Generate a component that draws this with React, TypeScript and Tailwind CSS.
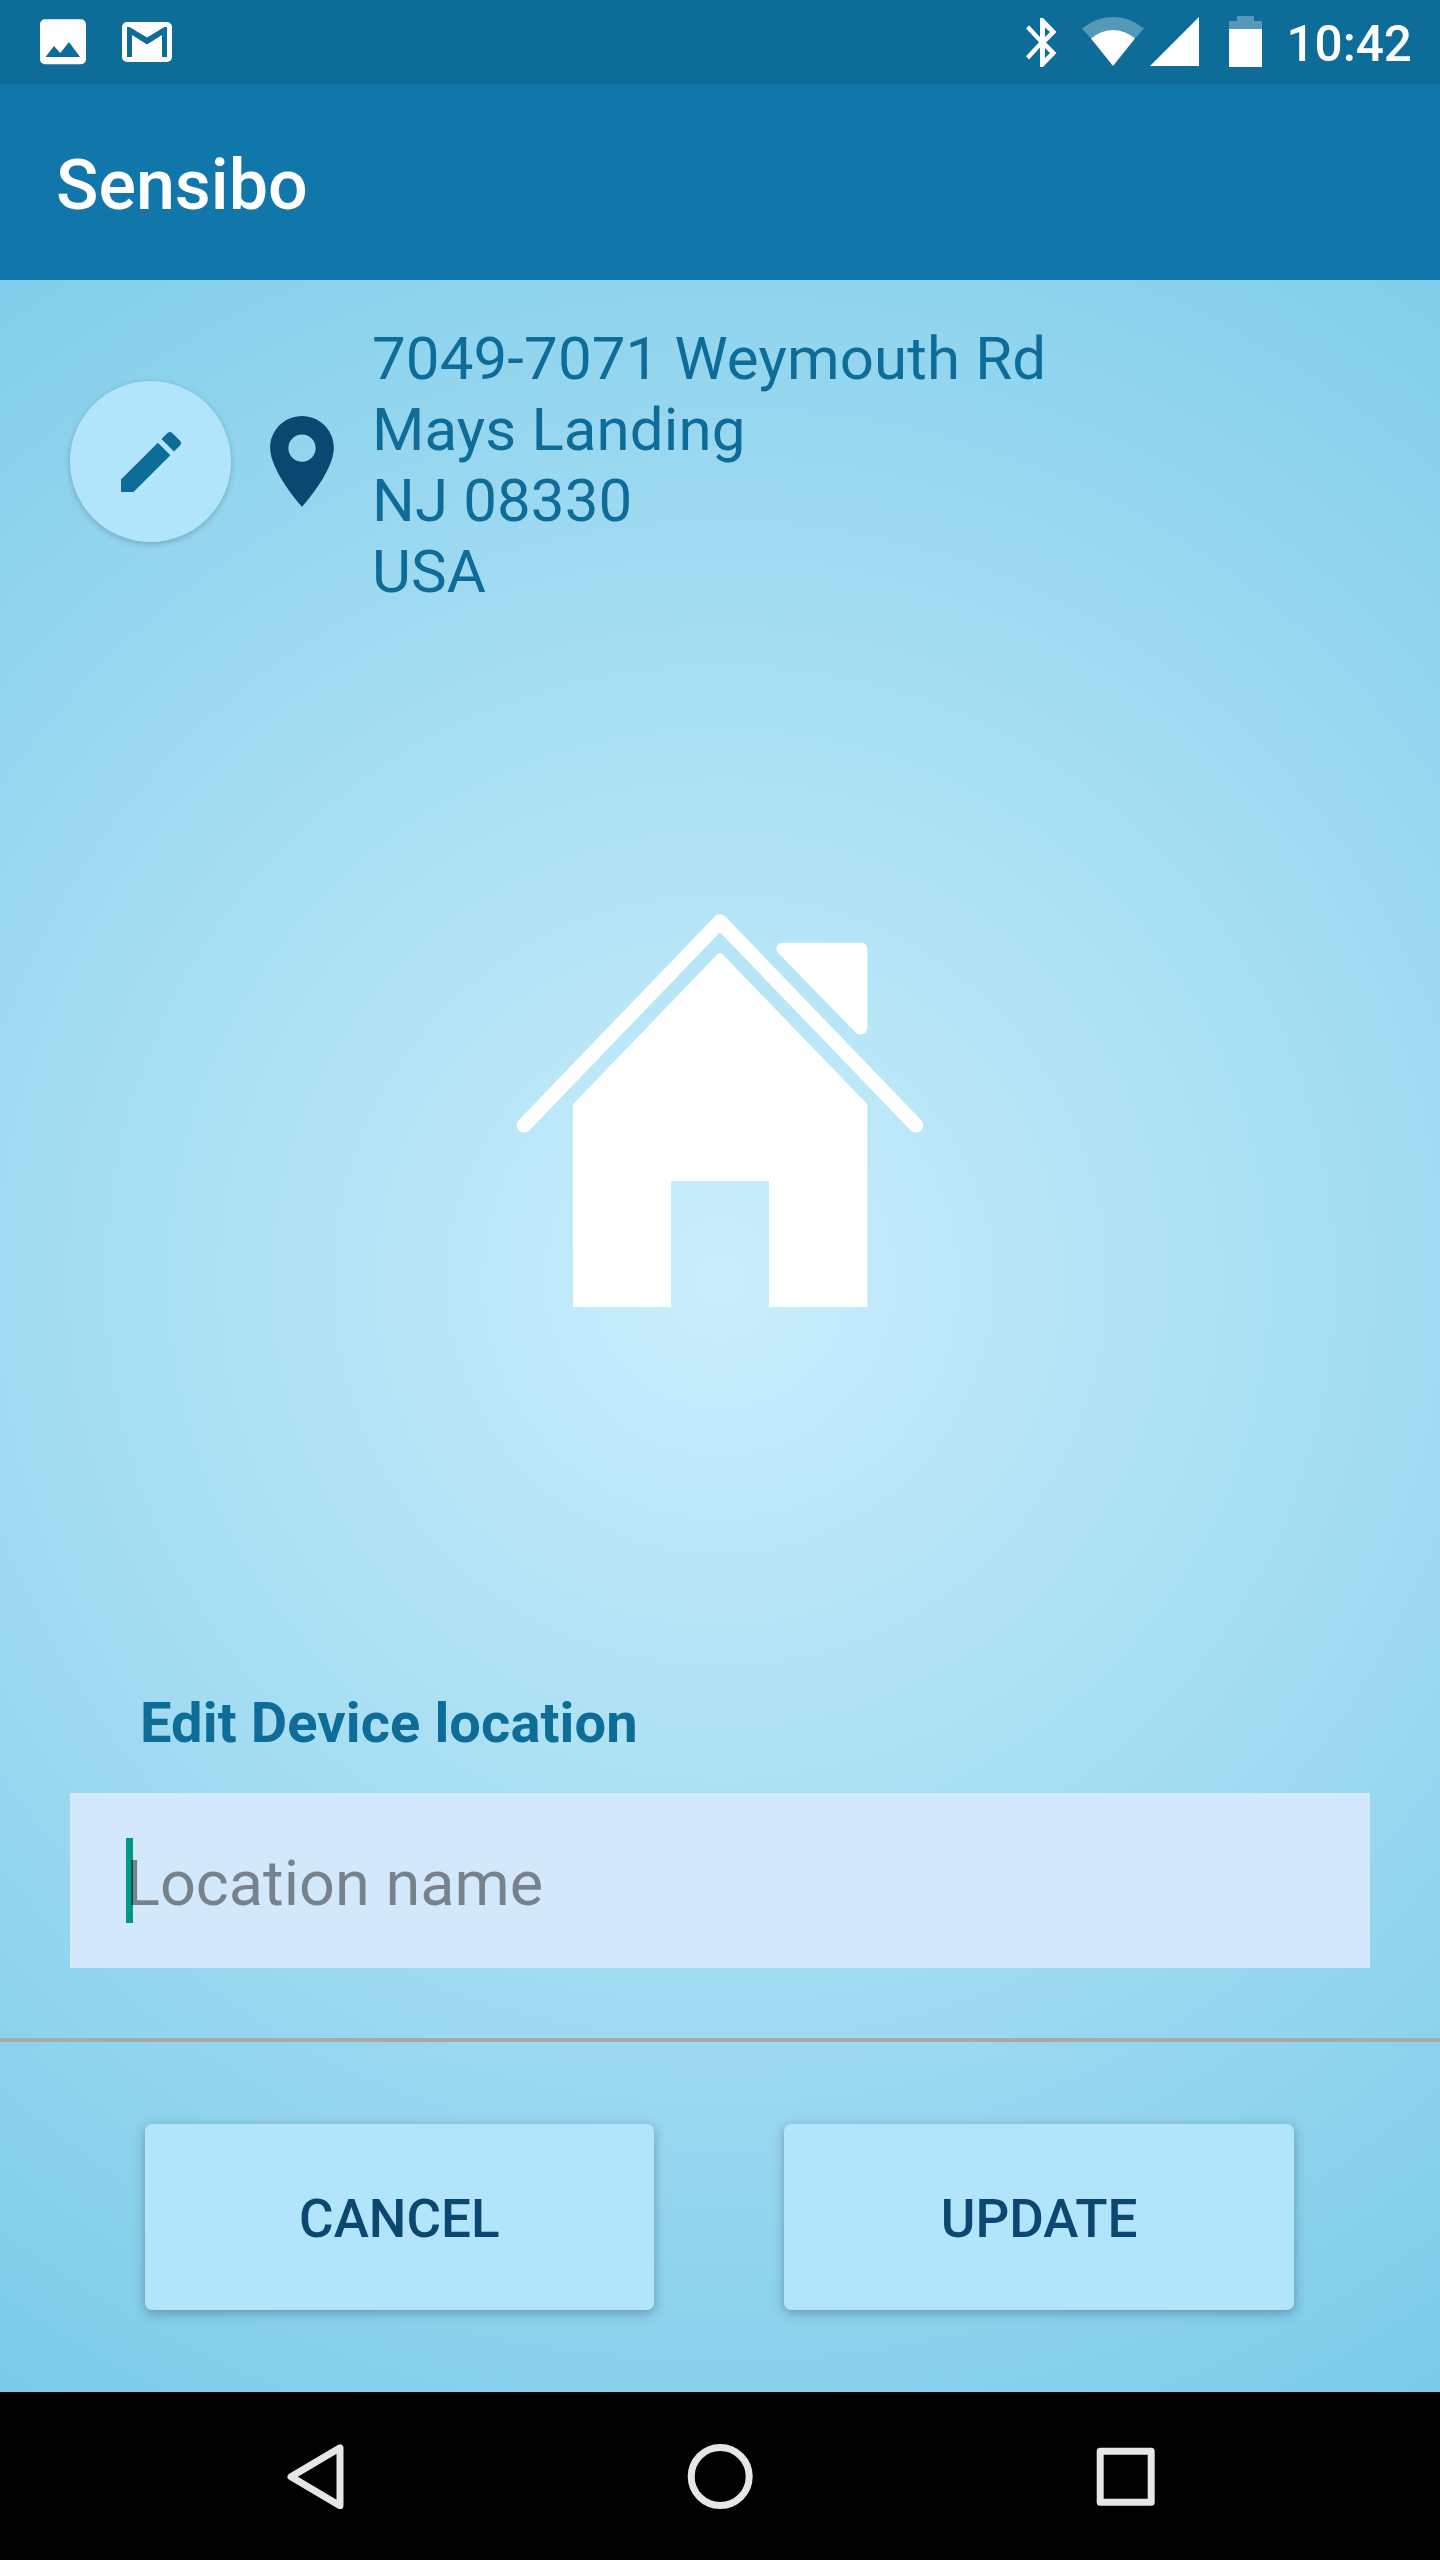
import React, { useState } from 'react';

const StatusBar = () => (
  <div className="h-[84px] bg-[#0e6c99] flex items-center justify-between pl-10 pr-7 text-white">
    <div className="flex items-center">
      <svg width="46" height="46" viewBox="0 0 46 46" fill="currentColor">
        <path fillRule="evenodd" d="M5 .3h36a5 5 0 0 1 5 5v35a5 5 0 0 1-5 5H5a5 5 0 0 1-5-5v-35a5 5 0 0 1 5-5zM5.500 38h34.500L29 23 20.300 34 14 27z" />
      </svg>
      <svg className="ml-9" width="50" height="40" viewBox="0 0 50 40" fill="currentColor">
        <path fillRule="evenodd" d="M5 0h40a5 5 0 0 1 5 5v30a5 5 0 0 1-5 5H5a5 5 0 0 1-5-5V5a5 5 0 0 1 5-5zM5 5v30h5V13l15 9.500L40 13v22h5V5h-2.500L25 15.500 7.500 5z" />
      </svg>
    </div>
    <div className="flex items-center">
      <svg width="237" height="84" viewBox="0 0 237 84" fill="currentColor">
        <path fillRule="evenodd" d="M14 18h3L30.500 32 20 42.500 30.500 53 17 67h-3V47.500L3 59.500 0 56.300 13 42.300 0 28.500 3 25.300 14 37zM19 27.500V37l5-5zM19 48v10l5-5z" />
        <path opacity=".3" d="M56 28.500Q70 17 87 17t31 11.500L109 38.500Q99 30 87 30T65 38.500z" />
        <path d="M65 38.500Q75 30 87 30t22 8.500L87 66z" />
        <path d="M173 17v49h-49z" />
        <path opacity=".3" d="M211 16h17v5h8v8h-33v-8h8z" />
        <path d="M203 29h33v38h-33z" />
      </svg>
      <span className="ml-[23px] pt-[5px] font-medium text-[49.5px] leading-none">10:42</span>
    </div>
  </div>
);

const House = () => (
  <svg className="mt-[283px] self-center" width="440" height="440" viewBox="0 0 1320 1320" fill="white">
    <path d="M72 706L660 95l588 611" fill="none" stroke="white" strokeWidth="44" strokeLinecap="round" strokeLinejoin="round" />
    <path d="M848 158h236a18 18 0 0 1 18 18v237a21 21 0 0 1-36 14L834 188a18 18 0 0 1 14-30z" />
    <path d="M652 193q8-8 16 0l434 450v608H807V873H513v378H219V643z" />
  </svg>
);

const NavBar = () => (
  <nav className="h-[168px] bg-black flex items-center justify-between px-[282px]">
    <button aria-label="Back">
      <svg width="66" height="66" viewBox="0 0 66 66" fill="none" stroke="#e6e6e6" strokeWidth="7" strokeLinejoin="round">
        <path d="M58 4.800v58L9 33.800z" />
      </svg>
    </button>
    <button aria-label="Home">
      <svg width="66" height="66" viewBox="0 0 66 66" fill="none" stroke="#e6e6e6" strokeWidth="7">
        <circle cx="33.200" cy="33.500" r="29" />
      </svg>
    </button>
    <button aria-label="Recents">
      <svg width="66" height="66" viewBox="0 0 66 66" fill="none" stroke="#e6e6e6" strokeWidth="7" strokeLinejoin="round">
        <rect x="8.200" y="8.200" width="51" height="51" />
      </svg>
    </button>
  </nav>
);

export default function App() {
  const [name, setName] = useState('');

  const address = ['7049-7071 Weymouth Rd', 'Mays Landing', 'NJ 08330', 'USA'];
  const actions = ['Cancel', 'Update'];

  return (
    <main className="w-[1440px] h-[2560px] flex flex-col font-['Roboto',sans-serif] overflow-hidden">
      <StatusBar />
      <header className="h-[196px] bg-[#1177aa] flex items-center px-14 pt-[6px]">
        <h1 className="text-white text-[70px] font-medium leading-none">Sensibo</h1>
      </header>

      <section className="flex-1 flex flex-col bg-[radial-gradient(circle_1325px_at_720px_1000px,#caeefd,#b1e3f5_32%,#9bd9f0_60%,#7bcbe8)]">
        <div className="flex items-start pl-[70px] pt-[43px]">
          <button
            aria-label="Edit address"
            className="mt-[58px] size-[161px] rounded-full bg-[#b2e5fc] text-[#0e6c99] flex items-center justify-center shadow-[0_2px_6px_rgba(0,0,0,0.2)]"
          >
            <svg width="80" height="80" viewBox="0 0 24 24" fill="currentColor">
              <path d="M3 17.250V21h3.750L17.810 9.940l-3.750-3.750L3 17.250zM20.710 7.040c.39-.39.39-1.020 0-1.410l-2.340-2.340c-.39-.39-1.020-.39-1.410 0l-1.830 1.830 3.750 3.750 1.830-1.830z" />
            </svg>
          </button>
          <svg className="mt-[93px] ml-[38.5px]" width="64" height="91" viewBox="5 2 14 20" fill="#0b4770">
            <path fillRule="evenodd" d="M12 2C8.130 2 5 5.130 5 9c0 5.250 7 13 7 13s7-7.750 7-13c0-3.870-3.130-7-7-7zm0 10.050a3 3 0 1 1 0-6 3 3 0 0 1 0 6z" />
          </svg>
          <address className="ml-[38.5px] not-italic text-[60px] leading-[71px] tracking-[0.12px] text-[#0e6c99]">
            {address.map((line) => (
              <div key={line}>{line}</div>
            ))}
          </address>
        </div>

        <House />

        <h2 className="mt-[360px] pl-[140px] text-[56px] leading-[66px] font-bold tracking-[0.12px] text-[#0e6c99]">Edit Device location</h2>
        <div className="relative mt-[37px] mx-[70px] h-[175px] bg-[#d4e8fc] px-14 flex items-center">
          <span className="absolute left-14 top-[45px] w-[7px] h-[85px] bg-[#009788]" />
          <input
            type="text"
            value={name}
            onChange={(e) => setName(e.target.value)}
            placeholder="Location name"
            className="relative w-full h-full pt-[6px] bg-transparent outline-none text-[63px] text-black placeholder:text-black/44"
          />
        </div>

        <div className="mt-[70px] h-1 bg-[#a9a9a9]" />

        <div className="flex-1 flex items-center gap-[130px] pl-[144.5px] pr-[146px]">
          {actions.map((label) => (
            <button
              key={label}
              className="flex-1 h-[186px] pt-[6px] rounded-[7px] bg-[#b2e5fc] text-[#0b4770] text-[53px] font-medium uppercase shadow-[0_3px_12px_rgba(0,0,0,0.28)]"
            >
              {label}
            </button>
          ))}
        </div>
      </section>

      <NavBar />
    </main>
  );
}
